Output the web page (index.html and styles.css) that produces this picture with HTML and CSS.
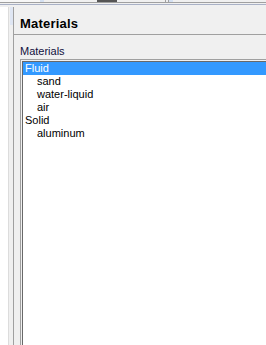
FILE: index.html
```html
<!DOCTYPE html>
<html lang="en">

<head>
    <meta charset="UTF-8">
    <meta name="viewport" content="width=device-width, initial-scale=1.0">
    <title>Materials</title>
    <link rel="stylesheet" href="styles.css">
</head>

<body>
    <div class="top-strip">
        <span class="seg seg-white"></span>
        <span class="seg seg-blue"></span>
        <span class="seg seg-grey"></span>
        <span class="seg seg-thumb"></span>
        <span class="seg seg-grey2"></span>
        <span class="seg seg-line"></span>
        <span class="seg seg-gap"></span>
        <span class="seg seg-line"></span>
        <span class="seg seg-blue2"></span>
        <span class="seg seg-rest"></span>
    </div>
    <div class="top-rules"></div>

    <div class="main">
        <div class="gutter"></div>
        <div class="splitter">
            <div class="splitter-grip"></div>
        </div>

        <div class="panel">
            <div class="panel-head">
                <h2>Materials</h2>
            </div>
            <div class="panel-body">
                <div class="field-label">Materials</div>
                <div class="listbox">
                    <div class="listbox-inner">
                        <div class="item selected">Fluid</div>
                        <div class="item child">sand</div>
                        <div class="item child">water-liquid</div>
                        <div class="item child">air</div>
                        <div class="item">Solid</div>
                        <div class="item child">aluminum</div>
                    </div>
                </div>
            </div>
        </div>
    </div>
</body>

</html>
```

FILE: styles.css
```css
body {
    margin: 0;
    width: 266px;
    height: 345px;
    overflow: hidden;
    background-color: #fff;
    font-family: "Liberation Sans", Arial, sans-serif;
    font-size: 11px;
    color: #000;
}

/* bits of the toolbar above */
.top-strip {
    display: flex;
    height: 2px;
}

.seg {
    display: block;
    height: 2px;
}

.seg-white { width: 40px; background-color: #f7f7f7; }
.seg-blue { width: 4px; background-color: #d4e0f2; }
.seg-grey { width: 53px; background-color: #f0f0f0; }
.seg-thumb { width: 20px; background-color: #555; }
.seg-grey2 { width: 48px; background-color: #f0f0f0; }
.seg-line { width: 1px; background-color: #a0a0a0; }
.seg-gap { width: 2px; background-color: #f0f0f0; }
.seg-blue2 { width: 4px; background-color: #d4e0f2; }
.seg-rest { flex: 1; background-color: #f0f0f0; }

.top-rules {
    height: 1px;
    border-top: 1px solid #a0a0a0;
    border-bottom: 1px solid #a9b1c6;
    background-color: #f0f0f0;
    box-shadow: 0 2px 0 #f0f0f0, 0 3px 0 #a0a0a0;
    margin-bottom: 2px;
}

.main {
    display: flex;
    height: 338px;
}

.gutter {
    width: 8px;
    background-color: #fff;
}

.splitter {
    width: 4px;
    border-left: 1px solid #dcdcdc;
    background-color: #f0f0f0;
}

.splitter-grip {
    width: 3px;
    height: 18px;
    margin-left: 1px;
    background-color: #dfe6f3;
}

.panel {
    flex: 1;
    display: flex;
    flex-direction: column;
    border-left: 1px solid #a0a0a0;
    background-color: #f0f0f0;
}

.panel-head {
    height: 27px;
    border-bottom: 1px solid #a0a0a0;
}

.panel-head h2 {
    margin: 0;
    padding: 9px 0 0 6px;
    font-size: 13px;
    font-weight: bold;
    line-height: 16px;
    letter-spacing: 0.2px;
}

.panel-body {
    flex: 1;
    display: flex;
    flex-direction: column;
    padding: 10px 0 0 6px;
}

.field-label {
    line-height: 13px;
    margin-bottom: 1px;
    color: #101040;
}

.listbox {
    flex: 1;
    border: 1px solid #a0a0a0;
    border-right: 0;
    border-bottom: 0;
    background-color: #f0f0f0;
    padding: 1px 0 0 1px;
}

.listbox-inner {
    height: 100%;
    border-top: 1px solid #696969;
    border-left: 1px solid #696969;
    background-color: #fff;
}

.item {
    height: 13px;
    line-height: 13px;
    padding-left: 2px;
    white-space: nowrap;
}

.item.child {
    padding-left: 14px;
}

.item.selected {
    background-color: #3399ff;
    color: #fff;
}
```
